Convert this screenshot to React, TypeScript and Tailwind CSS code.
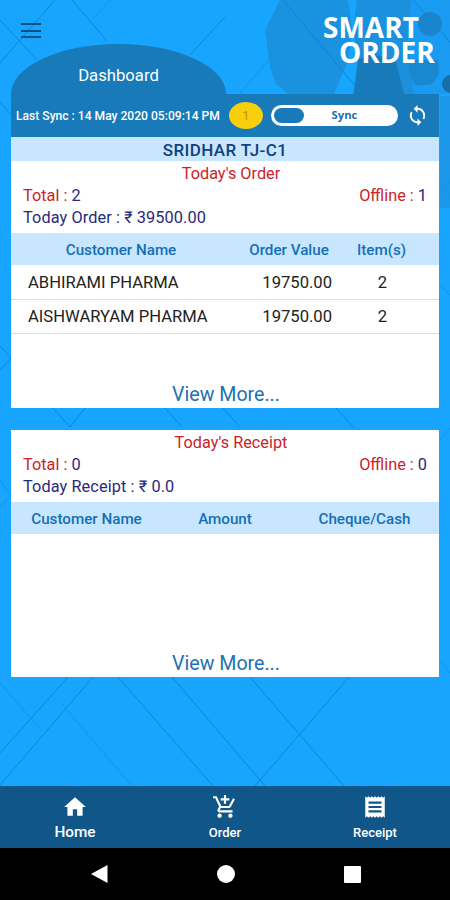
import { MdAddShoppingCart, MdHome, MdReceipt, MdSync } from 'react-icons/md';

const orders = [
  { name: 'ABHIRAMI PHARMA', value: '19750.00', items: 2 },
  { name: 'AISHWARYAM PHARMA', value: '19750.00', items: 2 },
];

function Backdrop() {
  return (
    <svg className="absolute inset-0 -z-10" width="450" height="786" viewBox="0 0 450 786" fill="none">
      <rect width="450" height="786" fill="#18a5ff" />
      <path d="M356 0h94v94h-48z" fill="#1a9bf2" />
      <path d="M280 0h68l4 28-4 32-14 34h-46l-12-10-6-16-5-38z" fill="#1b92e0" />
      <path d="M357 0h54l-3 40 6 54h-61l5-36-5-30z" fill="#1b90dc" />
      <path d="M358 60q18-10 38 2l8 32h-50z" fill="#187ab8" />
      <path d="M440 96h10v112h-10z" fill="#1a97e8" />
      <circle cx="430" cy="24" r="12" fill="#1a85cc" />
      <path d="M409 60h29l1 14-7 10-16 2-6-10z" fill="#1a88d0" />
      <circle cx="451" cy="84" r="9" fill="#186fa8" />
      <g stroke="#0b87d6">
        <path d="M55 0L0 63M0 20L37 60M72 0L107 41M225 17L190 55M283 0L362 94M413 0L450 42M0 102L12 116" />
        <path d="M0 346L11 358L0 370M53 408L70 427L85 408M165 408L182 427M223 408L240 427M336 408L353 427" />
        <path d="M68 677L0 753M93 677L0 785M118 677L213 786M172 677L265 786M250 677L344 786M349 677L255 786" />
      </g>
      <g stroke="#1297ea">
        <path d="M110 0L92 20M295 30L240 93M0 683L42 731M60 702L132 786M440 285L450 295M440 440L450 428M440 660L450 673M0 480L11 495L0 507M440 180L450 196M440 195L450 182" />
      </g>
    </svg>
  );
}

function Summary({ title, total, offline, label, amount }: { title: string; total: number; offline: number; label: string; amount: string }) {
  return (
    <div className="px-3 pt-px text-[16.3px] leading-[22px] text-[#29297c]">
      <h2 className="h-[23px] pl-3 text-center leading-6 text-[#cc2229]">{title}</h2>
      <div className="flex justify-between">
        <p><span className="text-[#cc2229]">Total :</span> {total}</p>
        <p><span className="text-[#cc2229]">Offline :</span> {offline}</p>
      </div>
      <p className="tracking-[0.1px]">{label} : ₹ {amount}</p>
    </div>
  );
}

export default function App() {
  return (
    <div className="relative isolate flex h-[900px] w-[450px] flex-col overflow-hidden font-['Roboto',sans-serif]">
      <Backdrop />

      {/* Header */}
      <header className="flex h-[94px] justify-between pl-[11px]">
        <div className="flex w-[215px] flex-col">
          <div className="h-11 pt-[23px] pl-2.5">
            <div className="flex h-[15px] w-5 flex-col justify-between">
              <span className="h-0.5 bg-[#0b4f83]" />
              <span className="h-0.5 bg-[#0b4f83]" />
              <span className="h-0.5 bg-[#0b4f83]" />
            </div>
          </div>
          <h1 className="h-[50px] rounded-t-[50%_100%] bg-[#187ab8] pt-5 text-center text-[16.7px] leading-6 text-white">
            Dashboard
          </h1>
        </div>
        <div className="w-[127px] pt-[15px] font-['Open_Sans',sans-serif] text-[28px] leading-[25px] font-bold text-white">
          <div>SMART</div>
          <div className="pl-4">ORDER</div>
        </div>
      </header>

      {/* Sync bar */}
      <div className="mx-[11px] flex h-[43px] w-[428px] items-center bg-[#187ab8] pl-[5px] text-white">
        <span className="w-[213px] pt-0.5 text-[12.1px] font-medium whitespace-nowrap">Last Sync : 14 May 2020 05:09:14 PM</span>
        <span className="flex h-[27px] w-[34px] items-center justify-center rounded-[50%] bg-[#f8cf0b] text-[13px] text-[#d18a12]">1</span>
        <div className="ml-2 flex h-[21px] w-[127px] items-center rounded-full bg-white p-[3px]">
          <span className="h-[15px] w-[30px] rounded-full bg-[#187ab8]" />
          <span className="flex-1 pr-2.5 text-center font-['Open_Sans',sans-serif] text-[11.3px] font-bold text-[#1c6faa]">Sync</span>
        </div>
        <MdSync className="ml-2 size-[23px]" />
      </div>

      {/* Orders */}
      <section className="mx-[11px] flex h-[271px] flex-col bg-white">
        <div className="h-6 bg-[#c8e6ff] text-center text-[17px] leading-[26px] font-medium tracking-[0.4px] text-[#123f7e]">SRIDHAR TJ-C1</div>
        <Summary title="Today's Order" total={2} offline={1} label="Today Order" amount="39500.00" />
        <div className="mt-1 grid h-8 grid-cols-[220px_116px_69px] items-center bg-[#c8e6ff] pt-[3px] text-center text-[15.2px] font-medium text-[#1470b4]">
          <span>Customer Name</span>
          <span>Order Value</span>
          <span>Item(s)</span>
        </div>
        {orders.map((order) => (
          <div key={order.name} className="grid h-[34.5px] grid-cols-[220px_101px_101px] items-center border-b border-[#dddddd] pt-[3px] text-[16.6px] text-[#222222]">
            <span className="pl-[17px]">{order.name}</span>
            <span className="text-right">{order.value}</span>
            <span className="text-center">{order.items}</span>
          </div>
        ))}
        <a className="mt-auto pl-0.5 text-center text-[19.6px] leading-[27px] text-[#1b72b4]">View More...</a>
      </section>

      {/* Receipts */}
      <section className="mx-[11px] mt-[22px] flex h-[247px] flex-col bg-white">
        <Summary title="Today's Receipt" total={0} offline={0} label="Today Receipt" amount="0.0" />
        <div className="mt-1 grid h-8 grid-cols-[151px_126px_151px] items-center bg-[#c8e6ff] pt-[3px] text-center text-[15.2px] font-medium text-[#1470b4]">
          <span>Customer Name</span>
          <span>Amount</span>
          <span className="pl-0.5">Cheque/Cash</span>
        </div>
        <a className="mt-auto pl-0.5 text-center text-[19.6px] leading-[27px] text-[#1b72b4]">View More...</a>
      </section>

      {/* Bottom navigation */}
      <nav className="mt-auto grid h-[62px] grid-cols-3 bg-[#115688] pt-2 text-white">
        <div className="flex flex-col items-center">
          <MdHome className="size-[26px]" />
          <span className="text-[15.3px] leading-6 font-medium">Home</span>
        </div>
        <div className="flex flex-col items-center">
          <MdAddShoppingCart className="size-[26px]" />
          <span className="text-[13px] leading-[25px] font-medium">Order</span>
        </div>
        <div className="flex flex-col items-center">
          <MdReceipt className="size-[26px]" />
          <span className="text-[13px] leading-[25px] font-medium">Receipt</span>
        </div>
      </nav>

      {/* Android buttons */}
      <div className="flex h-[52px] items-center justify-between bg-black pr-[89px] pl-[90px]">
        <svg width="18" height="18" viewBox="0 0 18 18" fill="white"><path d="M17.5 0v18L1 9z" /></svg>
        <span className="size-[18px] rounded-full bg-white" />
        <span className="size-[17px] rounded-[1px] bg-white" />
      </div>
    </div>
  );
}
